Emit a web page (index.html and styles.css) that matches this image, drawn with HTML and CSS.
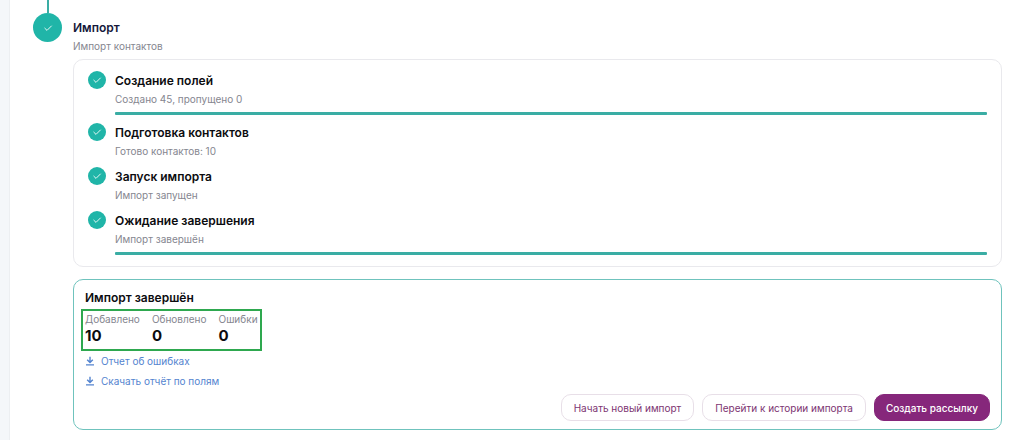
FILE: index.html
```html
<!DOCTYPE html>
<html lang="ru">
<head>
  <meta charset="UTF-8" />
  <meta name="viewport" content="width=device-width, initial-scale=1" />
  <title>Импорт контактов</title>
  <link rel="stylesheet" href="styles.css">
</head>
<body>

  <svg class="sprite" aria-hidden="true">
    <symbol id="check" viewBox="0 0 10 10">
      <path d="M1.8 5.2 L4 7.4 L8.4 3" fill="none" stroke="currentColor" stroke-width="1" stroke-linecap="round" stroke-linejoin="round" />
    </symbol>
    <symbol id="download" viewBox="0 0 10 10">
      <path d="M5 0.8 V6.4 M2.2 3.8 L5 6.6 L7.8 3.8 M1 8.9 H9" fill="none" stroke="currentColor" stroke-width="1.4" />
    </symbol>
  </svg>

  <main class="panel">
    <!-- Шаг -->
    <div class="rail">
      <div class="line"></div>
      <div class="circle"><svg class="icon"><use href="#check" /></svg></div>
    </div>

    <div class="step">
      <h1 class="title step-title">Импорт</h1>
      <p class="text">Импорт контактов</p>

      <!-- Ход импорта -->
      <ul class="card tasks">
        <li class="task">
          <span class="circle small"><svg class="icon"><use href="#check" /></svg></span>
          <div class="task-body">
            <h2 class="title">Создание полей</h2>
            <p class="text">Создано 45, пропущено 0</p>
            <div class="bar"></div>
          </div>
        </li>
        <li class="task">
          <span class="circle small"><svg class="icon"><use href="#check" /></svg></span>
          <div class="task-body">
            <h2 class="title">Подготовка контактов</h2>
            <p class="text">Готово контактов: 10</p>
          </div>
        </li>
        <li class="task">
          <span class="circle small"><svg class="icon"><use href="#check" /></svg></span>
          <div class="task-body">
            <h2 class="title">Запуск импорта</h2>
            <p class="text">Импорт запущен</p>
          </div>
        </li>
        <li class="task">
          <span class="circle small"><svg class="icon"><use href="#check" /></svg></span>
          <div class="task-body">
            <h2 class="title">Ожидание завершения</h2>
            <p class="text">Импорт завершён</p>
            <div class="bar"></div>
          </div>
        </li>
      </ul>

      <!-- Результат -->
      <section class="card result">
        <h2 class="title">Импорт завершён</h2>
        <dl class="stats">
          <div><dt>Добавлено</dt><dd>10</dd></div>
          <div><dt>Обновлено</dt><dd>0</dd></div>
          <div><dt>Ошибки</dt><dd>0</dd></div>
        </dl>
        <a class="link" href="#"><svg class="icon"><use href="#download" /></svg>Отчет об ошибках</a>
        <a class="link" href="#"><svg class="icon"><use href="#download" /></svg>Скачать отчёт по полям</a>
        <div class="buttons">
          <button class="button" type="button">Начать новый импорт</button>
          <button class="button" type="button">Перейти к истории импорта</button>
          <button class="button primary" type="button">Создать рассылку</button>
        </div>
      </section>
    </div>
  </main>

</body>
</html>
```

FILE: styles.css
```css
* {
  box-sizing: border-box;
  margin: 0;
  padding: 0;
}

body {
  background: #f4f7fa;
  font-family: Inter, "Liberation Sans", sans-serif;
  font-size: 10px;
  color: #0c0c0f;
  padding-left: 9px;
}

.sprite {
  display: none;
}

.panel {
  display: flex;
  gap: 11px;
  min-height: 100vh;
  padding: 0 22px 10px 23px;
  background: #fff;
  border-left: 1px solid #eceff2;
}

.rail {
  display: flex;
  flex-direction: column;
  align-items: center;
}

.line {
  width: 2px;
  height: 13px;
  background: #3aada4;
}

.circle {
  display: flex;
  align-items: center;
  justify-content: center;
  flex: none;
  width: 29px;
  height: 29px;
  border-radius: 50%;
  background: #20b5a8;
  color: #e3f8f5;
}

.small {
  width: 18px;
  height: 18px;
}

.icon {
  flex: none;
  width: 10px;
  height: 10px;
}

.step {
  flex: 1;
  padding-top: 18px;
}

.title {
  font-size: 12px;
  line-height: 20px;
  font-weight: 600;
}

.step-title {
  color: #15183a;
}

.text {
  line-height: 16px;
  color: #85868f;
}

.card {
  border: 1px solid #e9e9ed;
  border-radius: 10px;
}

.tasks {
  display: flex;
  flex-direction: column;
  gap: 8px;
  margin-top: 5px;
  padding: 11px 14px;
  list-style: none;
}

.task {
  display: flex;
  gap: 9px;
}

.task-body {
  flex: 1;
}

.bar {
  height: 3px;
  margin-top: 5px;
  border-radius: 1px;
  background: #3aada4;
}

.result {
  display: flex;
  flex-direction: column;
  align-items: flex-start;
  margin-top: 12px;
  padding: 8px 11px;
  border-color: #6fc3bd;
}

.stats {
  display: flex;
  gap: 12px;
  margin: 5px 0 4px;
  outline: 2px solid #2ea84f;
  outline-offset: 2px;
}

.stats dt {
  line-height: 12px;
  color: #85868f;
}

.stats dd {
  font-size: 15px;
  line-height: 22px;
  font-weight: 700;
}

.link {
  display: flex;
  align-items: center;
  gap: 6px;
  line-height: 20px;
  color: #5484cf;
  text-decoration: none;
}

.buttons {
  display: flex;
  gap: 8px;
  align-self: flex-end;
  margin-top: 3px;
}

.button {
  height: 27px;
  padding: 0 12px;
  border: 1px solid #e8dfe8;
  border-radius: 10px;
  background: #fff;
  font: inherit;
  color: #7d3572;
  cursor: pointer;
}

.primary {
  padding: 0 11px;
  border-color: #86277b;
  background: #86277b;
  font-weight: 500;
  color: #fff;
}
```
